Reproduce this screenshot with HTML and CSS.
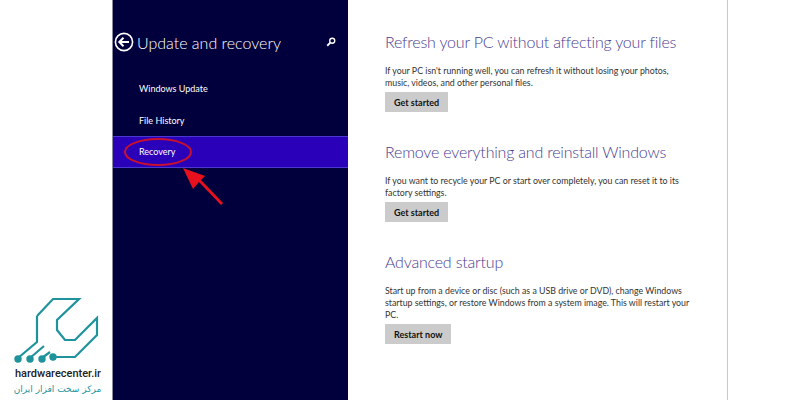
FILE: index.html
```html
<!DOCTYPE html>
<html lang="en">
<head>
    <meta charset="UTF-8">
    <title>Update and recovery</title>
    <link rel="stylesheet" href="styles.css">
</head>
<body>
    <div class="page">
        <aside class="brand">
            <svg class="brand-logo" width="95" height="72" viewBox="0 0 95 72" fill="none" stroke="#1f939c" stroke-width="2.2">
                <path d="M27 24L43 7H69L47 28V38L55 48H65L87 26V43L65 65H43"/>
                <path d="M27 24V50L8 66"/>
                <path d="M34 54L20 66M40 60L32 66"/>
                <circle cx="8" cy="67" r="2.6" fill="#1f939c"/>
                <circle cx="20" cy="67" r="2.6" fill="#1f939c"/>
                <circle cx="32" cy="67" r="2.6" fill="#1f939c"/>
                <circle cx="43" cy="65" r="2.6" fill="#1f939c"/>
            </svg>
            <div class="brand-name">hardwarecenter.ir</div>
            <div class="brand-fa" dir="rtl" lang="fa">مرکز سخت افزار ایران</div>
        </aside>

        <nav class="sidebar">
            <div class="sidebar-head">
                <svg class="back-icon" width="20" height="20" viewBox="0 0 20 20" fill="none" stroke="#fff" stroke-width="1.6">
                    <circle cx="10" cy="10" r="8.6"/>
                    <path d="M15 10H5.5M9.5 5.8L5.3 10L9.5 14.2" stroke-width="2"/>
                </svg>
                <h1>Update and recovery</h1>
                <svg class="search-icon" width="10" height="10" viewBox="0 0 12 12" fill="none" stroke="#fff">
                    <circle cx="7.5" cy="4.5" r="3" stroke-width="1.6"/>
                    <path d="M5.2 6.8L1.5 10.5" stroke-width="2.2"/>
                </svg>
            </div>
            <ul class="menu">
                <li>Windows Update</li>
                <li>File History</li>
                <li class="active">
                    Recovery
                    <svg class="mark" width="130" height="80" viewBox="0 0 130 80" fill="none">
                        <ellipse cx="45" cy="15" rx="33" ry="13" stroke="#c8102e" stroke-width="2"/>
                        <path d="M70 31L80 52L86 45L108 68L110 66L88 43L92 39Z" fill="#e8101c"/>
                    </svg>
                </li>
            </ul>
        </nav>

        <main class="content">
            <section class="block">
                <h2>Refresh your PC without affecting your files</h2>
                <p>If your PC isn't running well, you can refresh it without losing your photos, music, videos, and other personal files.</p>
                <button class="btn">Get started</button>
            </section>
            <section class="block">
                <h2>Remove everything and reinstall Windows</h2>
                <p>If you want to recycle your PC or start over completely, you can reset it to its factory settings.</p>
                <button class="btn">Get started</button>
            </section>
            <section class="block">
                <h2>Advanced startup</h2>
                <p>Start up from a device or disc (such as a USB drive or DVD), change Windows startup settings, or restore Windows from a system image. This will restart your PC.</p>
                <button class="btn">Restart now</button>
            </section>
        </main>
    </div>
</body>
</html>
```

FILE: styles.css
```css
* {
    box-sizing: border-box;
}

body {
    margin: 0;
    background: #fff;
    font-family: Lato, "Noto Sans", sans-serif;
}

.page {
    display: flex;
    width: 800px;
    height: 400px;
    overflow: hidden;
}

.brand {
    width: 112px;
    flex-shrink: 0;
    padding: 292px 0 0 10px;
}

.brand-logo {
    display: block;
}

.brand-name {
    font-family: Roboto, sans-serif;
    font-size: 11px;
    font-weight: 500;
    line-height: 14px;
    color: #222;
    margin: 3px 0 0 5px;
    white-space: nowrap;
}

.brand-fa {
    font-family: "DejaVu Sans", sans-serif;
    font-size: 9px;
    line-height: 16px;
    color: #1f939c;
    width: 95px;
    text-align: center;
    white-space: nowrap;
}

.sidebar {
    width: 236px;
    flex-shrink: 0;
    background: #02003c;
    border-left: 1px solid #8a8aa0;
    color: #fff;
}

.sidebar-head {
    display: flex;
    align-items: center;
    height: 26px;
    margin-top: 29px;
    padding-left: 1px;
}

.sidebar-head h1 {
    margin: 0 0 0 3px;
    font-size: 16px;
    font-weight: 300;
    white-space: nowrap;
}

.search-icon {
    margin-left: 45px;
}

.menu {
    list-style: none;
    margin: 18px 0 0;
    padding: 0;
    font-size: 9px;
}

.menu li {
    height: 31.5px;
    line-height: 31px;
    padding-left: 26px;
    position: relative;
}

.menu li.active {
    background: #2a00b8;
    border-top: 1px solid #4a38d0;
    border-bottom: 1px solid #4a38d0;
    line-height: 29px;
}

.mark {
    position: absolute;
    left: 0;
    top: 0;
}

.content {
    width: 380px;
    flex-shrink: 0;
    padding: 31px 0 0 37px;
    border-right: 1px solid #c8c8c8;
}

.block {
    height: 110px;
}

.block h2 {
    margin: 0;
    font-size: 16px;
    font-weight: 300;
    letter-spacing: -0.2px;
    line-height: 22px;
    color: #4a3d8f;
    white-space: nowrap;
}

.block p {
    margin: 12px 0 0;
    font-size: 8.8px;
    line-height: 12px;
    color: #333;
    width: 308px;
}

.btn {
    display: block;
    margin: 3px 0 0;
    height: 20px;
    padding: 0 9px;
    border: none;
    background: #cbcbcb;
    color: #111;
    font-family: inherit;
    font-size: 9px;
    font-weight: 700;
}
```
